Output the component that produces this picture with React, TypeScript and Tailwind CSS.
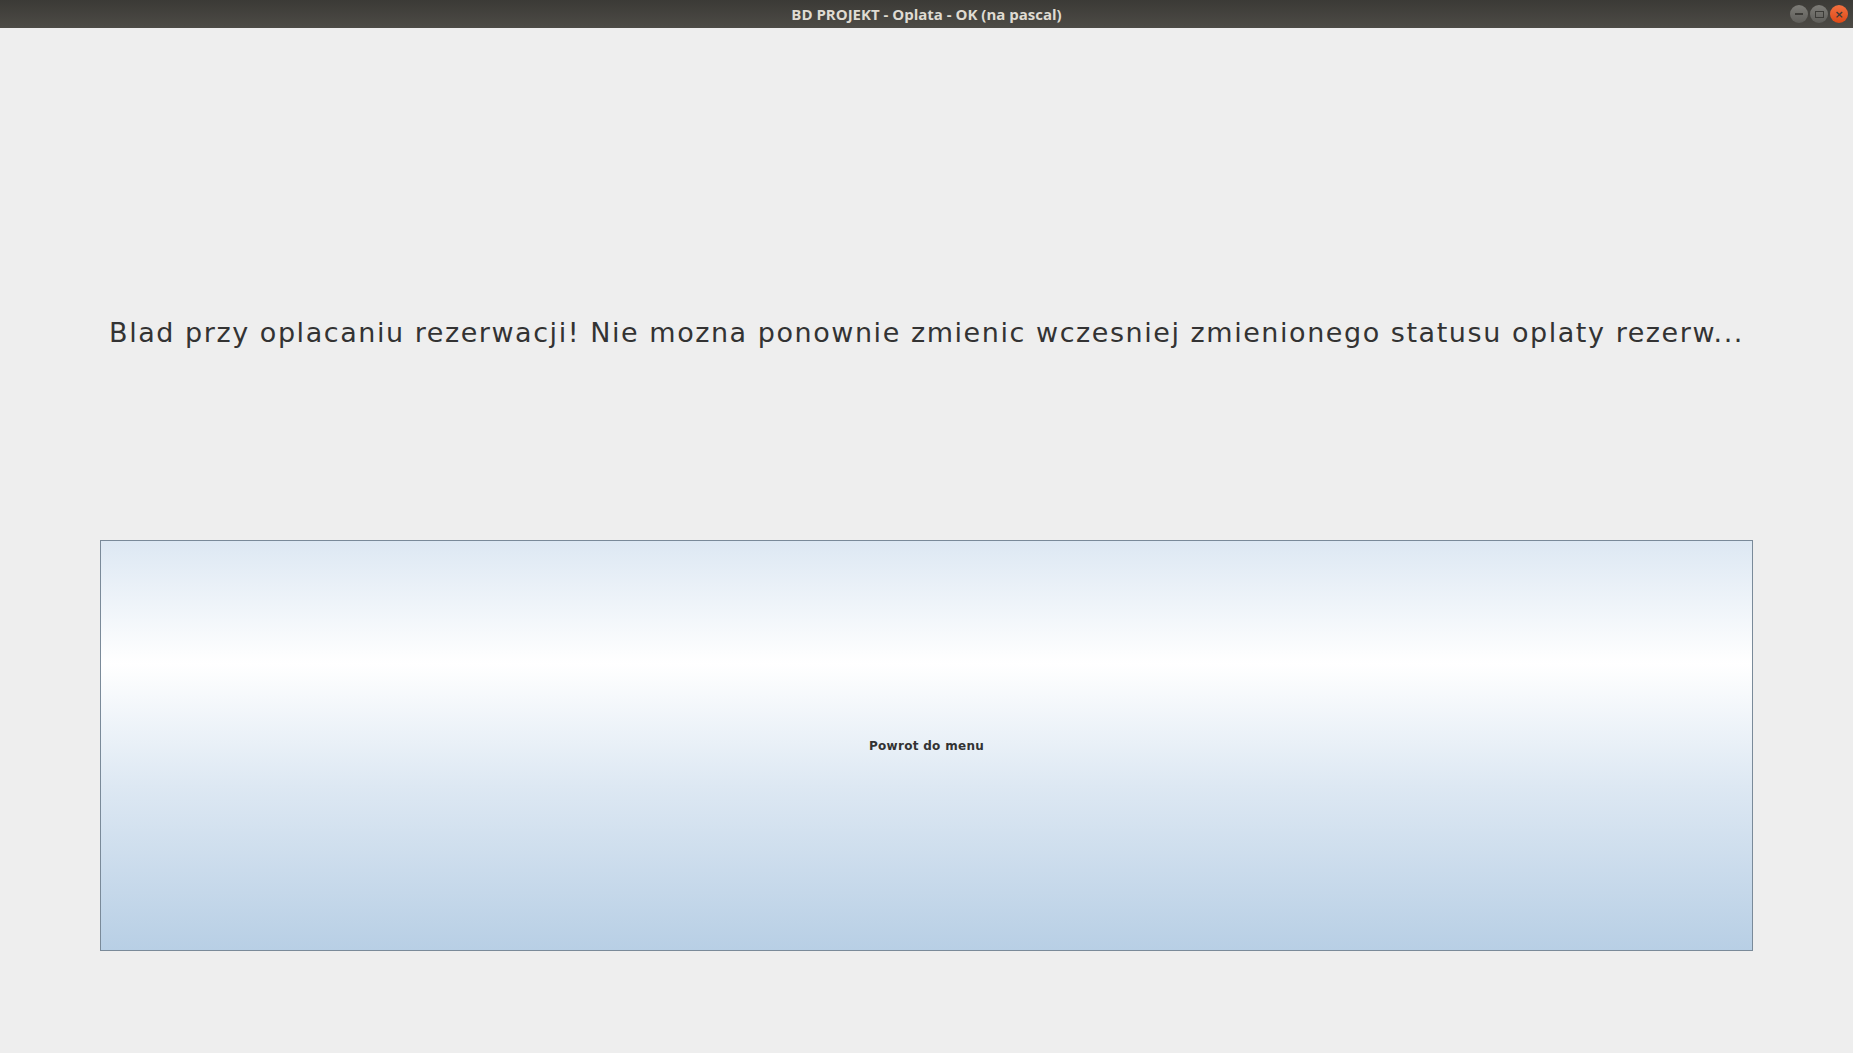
import React from 'react';

export default function App() {
  return (
    <div className="w-[1853px] h-[1053px] flex flex-col bg-[#eeeeee] overflow-hidden">
      {/* Title bar */}
      <div className="relative h-[28px] shrink-0 bg-gradient-to-b from-[#3b3a36] to-[#4d4b46] flex items-center justify-center">
        <span className="text-[15px] font-bold text-[#dfdbd2] font-['Open_Sans',sans-serif]">
          BD PROJEKT - Oplata - OK (na pascal)
        </span>
        <div className="absolute right-[5px] top-[5px] flex gap-[2px]">
          <div className="w-[18px] h-[18px] rounded-full bg-gradient-to-b from-[#7d7c77] to-[#5f5e5a] flex items-center justify-center">
            <div className="w-[8px] h-[2px] bg-[#3c3b37]" />
          </div>
          <div className="w-[18px] h-[18px] rounded-full bg-gradient-to-b from-[#7d7c77] to-[#5f5e5a] flex items-center justify-center">
            <div className="w-[9px] h-[7px] border-[1.5px] border-[#3c3b37]" />
          </div>
          <div className="w-[18px] h-[18px] rounded-full bg-gradient-to-b from-[#f2703f] to-[#dd4814] flex items-center justify-center text-[#3c3b37] text-[11px] font-bold leading-none font-['DejaVu_Sans',sans-serif]">
            ×
          </div>
        </div>
      </div>

      {/* Message */}
      <div className="mt-[285px] h-[40px] shrink-0 flex items-center justify-center">
        <p className="text-[27px] leading-[40px] tracking-[1.55px] text-[#333333] font-['DejaVu_Sans',sans-serif] whitespace-nowrap">
          Blad przy oplacaniu rezerwacji! Nie mozna ponownie zmienic wczesniej zmienionego statusu oplaty rezerw...
        </p>
      </div>

      {/* Button */}
      <div className="mt-[187px] px-[100px] shrink-0">
        <button className="w-[1653px] h-[411px] border border-[#7a8a99] bg-[linear-gradient(to_bottom,#dde8f3_0%,#ffffff_30%,#dde8f3_60%,#b8cfe5_100%)] flex items-center justify-center">
          <span className="text-[12px] font-bold text-[#333333] font-['DejaVu_Sans',sans-serif] tracking-[0.3px]">
            Powrot do menu
          </span>
        </button>
      </div>
    </div>
  );
}
